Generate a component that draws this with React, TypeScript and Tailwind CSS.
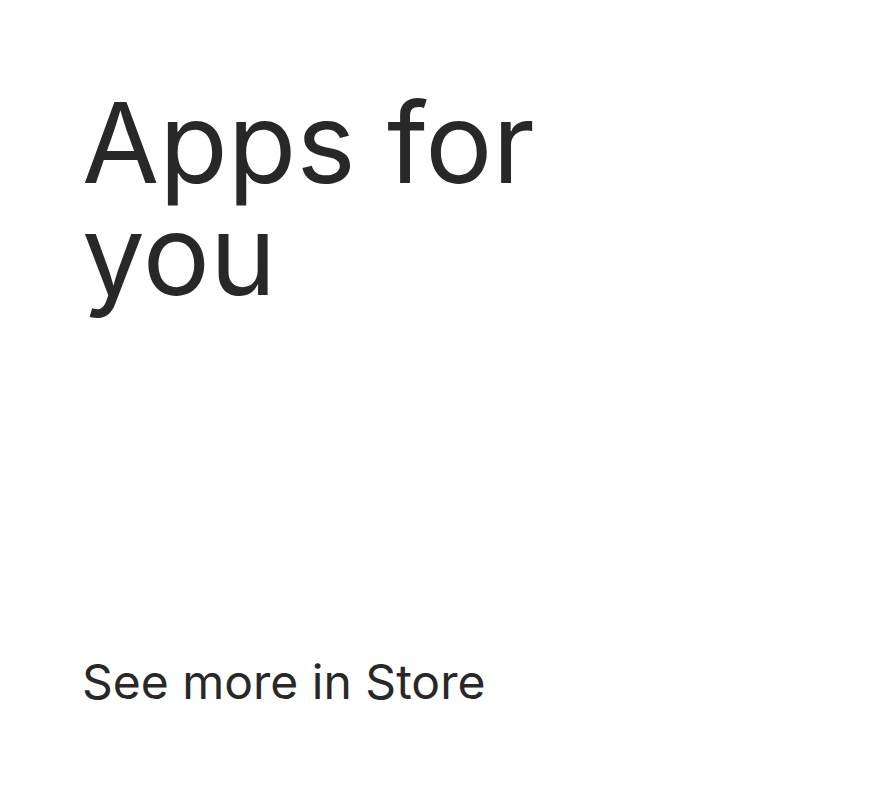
export default function App() {
  return (
    <div className="w-[892px] h-[792px] bg-white flex flex-col px-[82px] text-[#282828]" style={{ fontFamily: "Inter, 'Noto Sans', sans-serif" }}>
      <h1 className="mt-[86px] max-w-[500px] text-[112px] leading-[112px] font-normal tracking-[0px]">Apps for you</h1>
      <div className="mt-auto mb-[82px] text-[48px] leading-[56px]">See more in Store</div>
    </div>
  );
}
